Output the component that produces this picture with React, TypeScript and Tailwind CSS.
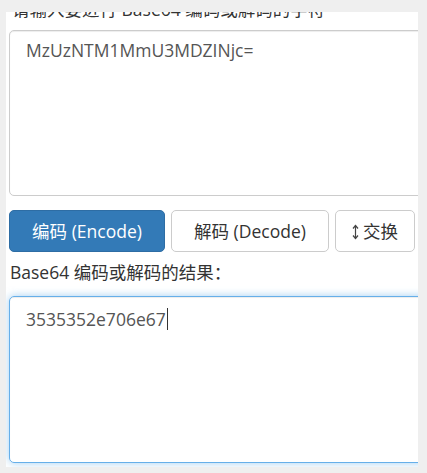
import { useState } from "react";

const font = "font-['Open_Sans','Noto_Sans_CJK_SC',sans-serif]";

function SwapIcon() {
  return (
    <svg width="7" height="16" viewBox="0 0 7 16" className="mr-[4px] mt-[2px]" aria-hidden>
      <path d="M3.5 1.5v13" stroke="#444" strokeWidth="1.2" fill="none" />
      <path d="M1 4.5l2.5-3 2.5 3M1 11.5l2.5 3 2.5-3" stroke="#444" strokeWidth="1.2" fill="none" />
    </svg>
  );
}

export default function App() {
  const [input] = useState("MzUzNTM1MmU3MDZINjc=");
  const [output] = useState("3535352e706e67");

  return (
    <div className={`min-h-[473px] bg-[#efefef] pt-[12px] pl-[6px] pr-[9px] ${font}`}>
      <div className="h-[455px] overflow-hidden bg-white px-[3px]">
        <p className="mt-[-15px] h-[25px] pl-[3px] text-[17.5px] leading-[25px] text-[#333]">
          请输入要进行 Base64 编码或解码的字符
        </p>

        <div className="mt-[8px] h-[166px] w-[440px] rounded-[5px] border border-[#ccc] px-[16px] py-[7px] text-[17.5px] leading-[25px] text-[#555] shadow-[inset_0_1px_1px_rgba(0,0,0,0.075)]">
          {input}
        </div>

        <div className="mt-[14px] flex gap-[6px] text-[17.5px] leading-[25px]">
          <button className="flex h-[42px] w-[156px] items-center justify-center rounded-[5px] border border-[#2e6da4] bg-[#337ab7] text-white">
            编码 (Encode)
          </button>
          <button className="flex h-[42px] w-[158px] items-center justify-center rounded-[5px] border border-[#ccc] bg-white text-[#333]">
            解码 (Decode)
          </button>
          <button className="flex h-[42px] w-[80px] items-center justify-center rounded-[5px] border border-[#ccc] bg-white text-[#333]">
            <SwapIcon />
            交换
          </button>
        </div>

        <p className="mt-[8px] pl-[1px] text-[17.5px] leading-[25px] text-[#333]">Base64 编码或解码的结果：</p>

        <div className="mt-[11px] h-[167px] w-[440px] rounded-[5px] border border-[#66afe9] px-[16px] py-[7px] text-[17.5px] leading-[25px] text-[#555] shadow-[inset_0_1px_1px_rgba(0,0,0,0.075),0_0_8px_rgba(102,175,233,0.6)]">
          {output}
          <span className="ml-[1px] inline-block h-[22px] w-px translate-y-[4px] bg-[#333]" />
        </div>
      </div>
    </div>
  );
}
